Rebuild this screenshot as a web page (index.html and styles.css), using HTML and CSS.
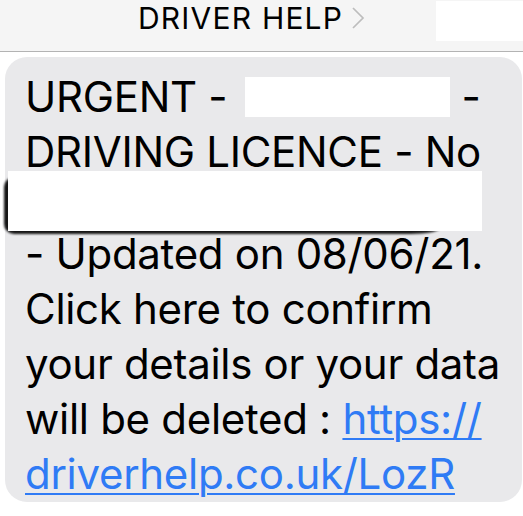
FILE: index.html
```html
<!DOCTYPE html>
<html>
<head>
<meta charset="utf-8">
<link rel="stylesheet" href="styles.css">
</head>
<body>
<header class="bar">
  <span class="title">DRIVER HELP</span>
  <svg class="chev" width="15" height="22" viewBox="0 0 15 22"><polyline points="3,1 13,11 3,21" fill="none" stroke="#bdbdbd" stroke-width="1.7"/></svg>
  <span class="mask-top"></span>
</header>
<main class="thread">
  <div class="bubble">
    <div class="line">URGENT - <span class="mask-inline"></span> -</div>
    <div class="line">DRIVING LICENCE - No</div>
    <div class="line mask-line">
      <span class="smudge"></span>
      <span class="mask-block"></span>
    </div>
    <div class="line">- Updated on 08/06/21.</div>
    <div class="line">Click here to confirm</div>
    <div class="line">your details or your data</div>
    <div class="line">will be deleted : <a class="link" href="#">https://</a></div>
    <div class="line"><a class="link" href="#">driverhelp.co.uk/LozR</a></div>
  </div>
</main>
</body>
</html>
```
FILE: styles.css
```css
html, body {
  margin: 0;
  padding: 0;
  background: #ffffff;
}
body {
  width: 523px;
  height: 516px;
  overflow: hidden;
  font-family: Inter, "Liberation Sans", sans-serif;
  color: #000;
}
.bar {
  display: flex;
  align-items: flex-start;
  height: 51px;
  background: #f5f5f5;
  border-bottom: 1px solid #b3b3b3;
  padding-left: 138px;
  box-sizing: content-box;
}
.title {
  font-size: 30px;
  line-height: 36px;
  letter-spacing: 1.2px;
  color: #000;
}
.chev {
  margin-left: 7px;
  margin-top: 7px;
}
.mask-top {
  margin-left: auto;
  margin-top: 1px;
  width: 87px;
  height: 40px;
  background: #fff;
}
.thread {
  padding: 5px 1px 0 5px;
}
.bubble {
  background: #e9e9eb;
  border-radius: 22px;
  padding: 12px 10px 1px 20px;
  font-size: 42px;
  line-height: 55px;
  letter-spacing: -0.3px;
}
.line {
  white-space: nowrap;
  height: 55px;
}
.mask-inline {
  display: inline-block;
  margin-left: 6px;
  width: 205px;
  height: 40px;
  background: #fff;
  vertical-align: -5px;
}
.mask-line {
  position: relative;
  z-index: 0;
  margin-left: -17px;
}
.mask-block {
  position: relative;
  display: block;
  margin-top: -8px;
  width: 474px;
  height: 60px;
  background: #fff;
}
.smudge {
  position: absolute;
  left: -4px;
  top: 6px;
  width: 436px;
  height: 57px;
  background: #151515;
  border-radius: 10px 0 30px 10px / 10px 0 6px 10px;
  filter: blur(1px);
}
.link {
  color: #2f7bf5;
  text-decoration: underline;
  text-decoration-thickness: 2px;
  text-underline-offset: 4px;
}
```
